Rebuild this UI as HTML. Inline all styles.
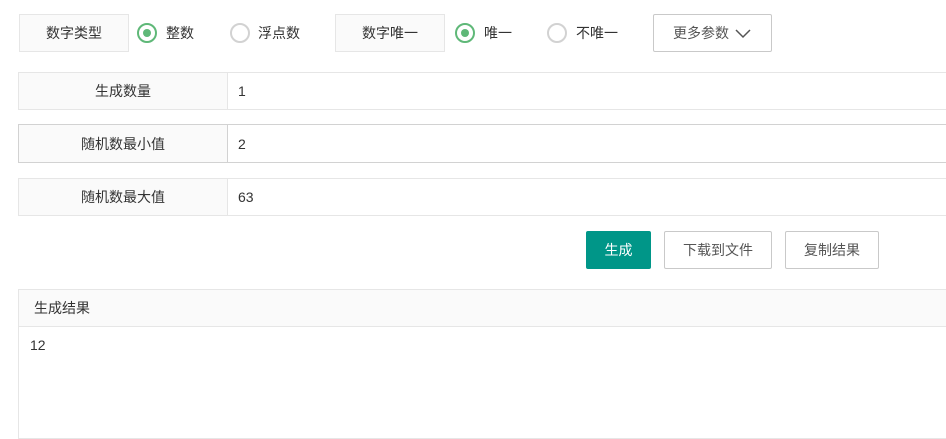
<!DOCTYPE html>
<html><head><meta charset="utf-8"><style>
*{box-sizing:border-box;margin:0;padding:0}
body{width:946px;height:428px;background:#fff;font-family:"Liberation Sans","Noto Sans CJK SC",sans-serif;font-size:14px;color:#333;position:relative;overflow:hidden}
.a{position:absolute}
.lb{background:#fafafa;border:1px solid #e6e6e6;display:flex;align-items:center;justify-content:center;color:#333}
.r{width:20px;height:20px;border-radius:50%;border:2px solid #d2d2d2;background:#fff}
.r.on{border-color:#5fb878}
.r.on::after{content:"";position:absolute;left:4px;top:4px;width:8px;height:8px;border-radius:50%;background:#5fb878}
.t{line-height:20px;color:#333}
.row{left:18px;width:940px;height:38px;border:1px solid #e6e6e6;display:flex}
.row .k{width:209px;background:#fafafa;border-right:1px solid #e6e6e6;display:flex;align-items:center;justify-content:center}
.row .v{padding-left:10px;display:flex;align-items:center}
.btn{border:1px solid #c9c9c9;background:#fff;display:flex;align-items:center;justify-content:center;color:#555;height:38px;border-radius:2px}
</style></head><body>
<div class="a lb" style="left:19px;top:14px;width:110px;height:38px">数字类型</div>
<div class="a r on" style="left:137px;top:23px"></div><div class="a t" style="left:166px;top:23px">整数</div>
<div class="a r" style="left:230px;top:23px"></div><div class="a t" style="left:258px;top:23px">浮点数</div>
<div class="a lb" style="left:335px;top:14px;width:110px;height:38px">数字唯一</div>
<div class="a r on" style="left:455px;top:23px"></div><div class="a t" style="left:484px;top:23px">唯一</div>
<div class="a r" style="left:547px;top:23px"></div><div class="a t" style="left:576px;top:23px">不唯一</div>
<div class="a btn" style="left:653px;top:14px;width:119px">更多参数 <svg width="18" height="12" style="margin-left:5px" viewBox="0 0 18 12"><path d="M2 3l7 7 7-7" fill="none" stroke="#555" stroke-width="1.5"/></svg></div>

<div class="a row" style="top:72px"><div class="k">生成数量</div><div class="v">1</div></div>
<div class="a row" style="top:124px;border-color:#d2d2d2;height:39px"><div class="k" style="border-right-color:#d2d2d2">随机数最小值</div><div class="v">2</div></div>
<div class="a row" style="top:178px"><div class="k">随机数最大值</div><div class="v">63</div></div>

<div class="a btn" style="left:586px;top:231px;width:65px;background:#009688;border-color:#009688;color:#fff">生成</div>
<div class="a btn" style="left:664px;top:231px;width:108px">下载到文件</div>
<div class="a btn" style="left:785px;top:231px;width:94px">复制结果</div>

<div class="a" style="left:18px;top:289px;width:940px;height:150px;border:1px solid #e6e6e6">
<div style="height:37px;background:#fafafa;border-bottom:1px solid #e6e6e6;padding-left:15px;line-height:37px">生成结果</div>
<div style="padding:8px 0 0 11px;line-height:20px">12</div>
</div>
</body></html>
